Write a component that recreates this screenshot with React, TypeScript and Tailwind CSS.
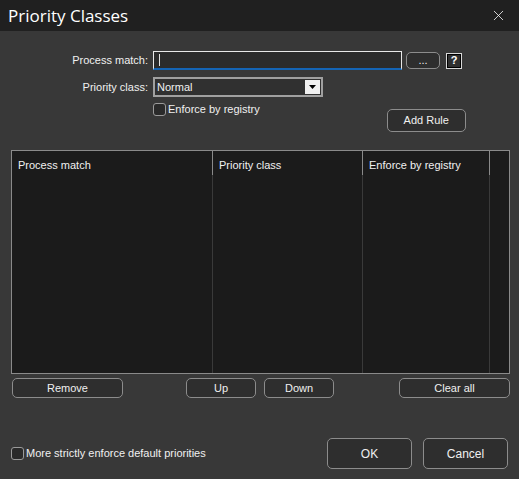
import { X } from "lucide-react";

const ui = "font-['Liberation_Sans',Arial,sans-serif] text-[11px] text-[#f0f0f0]";

function Btn({ label, className }: { label: string; className: string }) {
  return (
    <button
      className={`flex items-center justify-center rounded-[5px] border border-[#8c8c8c] bg-[#2e2e2e] text-[#f0f0f0] ${className}`}
    >
      {label}
    </button>
  );
}

function Check({ label }: { label: string }) {
  return (
    <label className="flex items-center gap-[2px]">
      <span className="h-[13px] w-[13px] rounded-[3px] border border-[#9a9a9a] bg-[#2a2a2a]" />
      <span>{label}</span>
    </label>
  );
}

export default function App() {
  const cols = [
    { name: "Process match", w: "w-[201px]" },
    { name: "Priority class", w: "w-[150px]" },
    { name: "Enforce by registry", w: "w-[127px]" },
  ];

  return (
    <div className={`flex h-[479px] w-[519px] flex-col bg-[#383838] ${ui}`}>
      {/* title bar */}
      <div className="flex h-[31px] items-center justify-between bg-[#202020] pl-[8px] pr-[12px]">
        <span className="font-['Open_Sans',sans-serif] text-[17px] leading-none text-white">
          Priority Classes
        </span>
        <X size={17} strokeWidth={1.1} className="text-white" />
      </div>

      {/* rule form */}
      <div className="mt-[20px] flex items-center">
        <span className="w-[148px] text-right">Process match:</span>
        <div className="ml-[5px] flex h-[19px] w-[249px] items-center border border-[#e8e8e8] border-b-2 border-b-[#1464b4] bg-[#2b2b2b] pl-[5px]">
          <span className="h-[12px] w-px bg-[#e0e0e0]" />
        </div>
        <Btn label="..." className="ml-[4px] h-[17px] w-[34px]" />
        <div className="ml-[6px] flex h-[16px] w-[16px] items-center justify-center border border-[#d8d8d8] bg-black p-px">
          <div className="flex h-full w-full items-center justify-center bg-[#303030] text-[11px] font-bold leading-none text-white">
            ?
          </div>
        </div>
      </div>

      <div className="mt-[7px] flex items-center">
        <span className="w-[148px] text-right">Priority class:</span>
        <div className="ml-[5px] flex h-[20px] w-[170px] items-center border-2 border-[#a0a0a0] bg-[#303030]">
          <span className="flex-1 pl-[2px]">Normal</span>
          <div className="mr-px flex h-[14px] w-[15px] items-center justify-center bg-[#f0f0f0]">
            <svg width="7" height="4" viewBox="0 0 7 4">
              <path d="M0 0h7L3.5 4z" fill="#000" />
            </svg>
          </div>
        </div>
      </div>

      <div className="flex">
        <div className="ml-[153px] mt-[4px]">
          <Check label="Enforce by registry" />
        </div>
        <Btn label="Add Rule" className="ml-[127px] mt-[12px] h-[23px] w-[79px]" />
      </div>

      {/* rules list */}
      <div className="ml-[11px] mt-[18px] flex h-[224px] w-[499px] border border-[#8a8a8a] bg-[#1b1b1b]">
        {cols.map((c) => (
          <div key={c.name} className={`flex flex-col ${c.w} border-r border-[#3a3a3a]`}>
            <div className="-mr-px h-[24px] border-r border-[#8a8a8a] pl-[6px] pt-[6px] text-[#f0f0f0]">
              {c.name}
            </div>
          </div>
        ))}
        <div className="flex-1" />
      </div>

      <div className="ml-[12px] mt-[4px] flex">
        <Btn label="Remove" className="h-[20px] w-[111px]" />
        <Btn label="Up" className="ml-[63px] h-[20px] w-[70px]" />
        <Btn label="Down" className="ml-[8px] h-[20px] w-[70px]" />
        <Btn label="Clear all" className="ml-[65px] h-[20px] w-[111px]" />
      </div>

      <div className="mt-[40px] flex items-center">
        <div className="ml-[11px] w-[316px]">
          <Check label="More strictly enforce default priorities" />
        </div>
        <Btn label="OK" className="h-[31px] w-[85px] text-[12px]" />
        <Btn label="Cancel" className="ml-[11px] h-[31px] w-[85px] text-[12px]" />
      </div>
    </div>
  );
}
